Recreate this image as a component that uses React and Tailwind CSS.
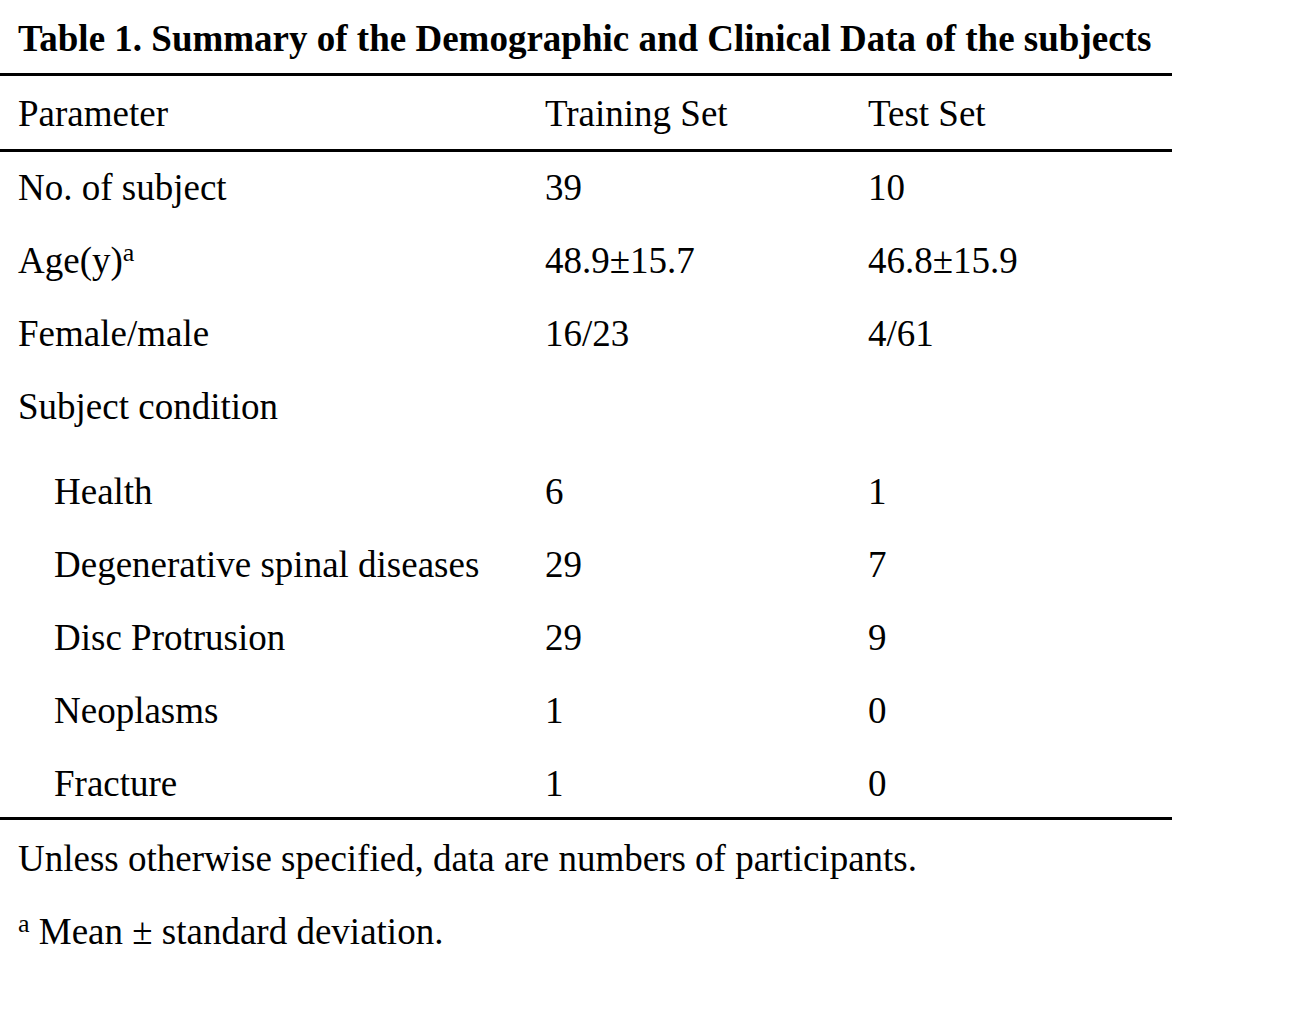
const rows = [
  { label: 'No. of subject', train: '39', test: '10' },
  { label: 'Age(y)', sup: 'a', train: '48.9±15.7', test: '46.8±15.9' },
  { label: 'Female/male', train: '16/23', test: '4/61' },
  { label: 'Subject condition', train: '', test: '' },
];

const conditions = [
  { label: 'Health', train: '6', test: '1' },
  { label: 'Degenerative spinal diseases', train: '29', test: '7' },
  { label: 'Disc Protrusion', train: '29', test: '9' },
  { label: 'Neoplasms', train: '1', test: '0' },
  { label: 'Fracture', train: '1', test: '0' },
];

function Row({ row, indent, className = 'h-[73px]' }) {
  return (
    <div className={`grid grid-cols-[527px_323px_1fr] pl-[18px] leading-[71px] whitespace-nowrap ${className}`}>
      <div className={indent ? 'pl-[36px]' : ''}>
        {row.label}
        {row.sup && <span className="text-[26px] relative top-[-12px]">{row.sup}</span>}
      </div>
      <div>{row.train}</div>
      <div>{row.test}</div>
    </div>
  );
}

export default function App() {
  return (
    <div className="min-h-screen bg-white text-black font-['Liberation_Serif','Times_New_Roman',serif] text-[37px]">
      <div className="w-[1172px]">
        <div className="h-[73px] pl-[18px] font-bold text-[37px] leading-[77px] whitespace-nowrap">
          Table 1. Summary of the Demographic and Clinical Data of the subjects
        </div>
        <div className="border-t-[3px] border-black" />
        <div className="grid grid-cols-[527px_323px_1fr] h-[73px] pl-[18px] leading-[76px]">
          <div>Parameter</div>
          <div>Training Set</div>
          <div>Test Set</div>
        </div>
        <div className="border-t-[3px] border-black" />
        {rows.map((r) => (
          <Row key={r.label} row={r} />
        ))}
        <div className="h-[12px]" />
        {conditions.map((r, i) => (
          <Row
            key={r.label}
            row={r}
            indent
            className={i === conditions.length - 1 ? 'h-[69px]' : 'h-[73px]'}
          />
        ))}
        <div className="border-t-[3px] border-black" />
        <div className="pl-[18px] leading-[73px] pt-[2px] whitespace-nowrap">
          <p>Unless otherwise specified, data are numbers of participants.</p>
          <p>
            <span className="text-[26px] relative top-[-12px]">a</span> Mean ± standard deviation.
          </p>
        </div>
      </div>
    </div>
  );
}
